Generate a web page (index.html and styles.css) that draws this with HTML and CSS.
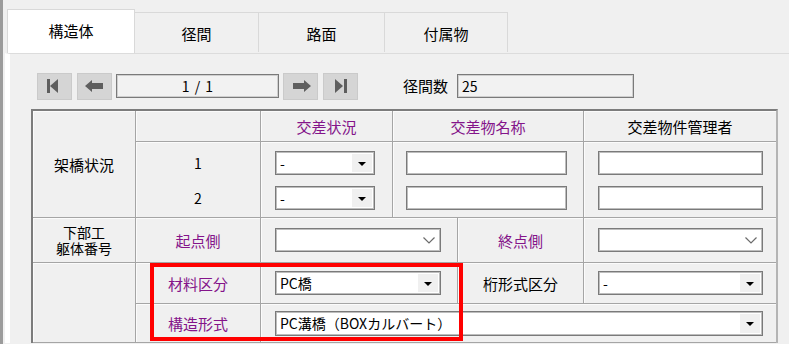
FILE: index.html
```html
<!DOCTYPE html>
<html lang="ja">
<head>
    <meta charset="UTF-8">
    <title>構造体</title>
    <link rel="stylesheet" href="styles.css">
</head>
<body>
    <div class="window">
        <div class="tabs">
            <div class="tab active">構造体</div>
            <div class="tab w124">径間</div>
            <div class="tab w126">路面</div>
            <div class="tab w123">付属物</div>
        </div>
        <div class="panel">
            <div class="panel-body">
                <div class="nav">
                    <button class="nav-btn" type="button">
                        <svg width="35" height="27" viewBox="0 0 35 27"><rect x="10" y="6" width="3" height="14" fill="#5e5e5e"/><polygon points="21,6 13,13 21,20" fill="#5e5e5e"/></svg>
                    </button>
                    <button class="nav-btn" type="button">
                        <svg width="35" height="27" viewBox="0 0 35 27"><polygon points="8,13 15,7 15,10 26,10 26,16 15,16 15,19" fill="#5e5e5e"/></svg>
                    </button>
                    <div class="page-box">1 / 1</div>
                    <button class="nav-btn" type="button">
                        <svg width="35" height="27" viewBox="0 0 35 27"><polygon points="28,13 21,7 21,10 10,10 10,16 21,16 21,19" fill="#5e5e5e"/></svg>
                    </button>
                    <button class="nav-btn" type="button">
                        <svg width="35" height="27" viewBox="0 0 35 27"><polygon points="12,6 20,13 12,20" fill="#5e5e5e"/><rect x="21" y="6" width="3" height="14" fill="#5e5e5e"/></svg>
                    </button>
                    <span class="span-label">径間数</span>
                    <div class="span-box">25</div>
                </div>

                <div class="sheet">
                    <!-- 架橋状況 -->
                    <div class="cell c1 r1-3">架橋状況</div>
                    <div class="cell c2 r1"></div>
                    <div class="cell c3 r1 purple">交差状況</div>
                    <div class="cell c4-6 r1 purple">交差物名称</div>
                    <div class="cell c6 r1 last">交差物件管理者</div>

                    <div class="cell c2 r2 stack">
                        <div class="num">1</div>
                        <div class="num">2</div>
                    </div>
                    <div class="cell c3 r2 stack pad">
                        <div class="select w100"><span>-</span><i class="arrow"></i></div>
                        <div class="select w100"><span>-</span><i class="arrow"></i></div>
                    </div>
                    <div class="cell c4-6 r2 stack pad13">
                        <div class="input w161"></div>
                        <div class="input w161"></div>
                    </div>
                    <div class="cell c6 r2 stack pad last">
                        <div class="input w165"></div>
                        <div class="input w165"></div>
                    </div>

                    <!-- 下部工 躯体番号 -->
                    <div class="cell c1 r3 tight">
                        <span>下部工</span>
                        <span>躯体番号</span>
                    </div>
                    <div class="cell c2 r3 purple">起点側</div>
                    <div class="cell c3-5 r3 pad left">
                        <div class="combo w166">
                            <svg width="12" height="7" viewBox="0 0 12 7"><polyline points="0.5,0.5 6,6 11.5,0.5" fill="none" stroke="#6b6b6b" stroke-width="1.2"/></svg>
                        </div>
                    </div>
                    <div class="cell c5 r3 purple">終点側</div>
                    <div class="cell c6 r3 pad left last">
                        <div class="combo w165">
                            <svg width="12" height="7" viewBox="0 0 12 7"><polyline points="0.5,0.5 6,6 11.5,0.5" fill="none" stroke="#6b6b6b" stroke-width="1.2"/></svg>
                        </div>
                    </div>

                    <!-- 材料区分 / 構造形式 -->
                    <div class="cell c1 r4-6"></div>
                    <div class="cell c2 r4 purple">材料区分</div>
                    <div class="cell c3-5 r4 pad left">
                        <div class="select w166"><span>PC橋</span><i class="arrow"></i></div>
                    </div>
                    <div class="cell c5 r4">桁形式区分</div>
                    <div class="cell c6 r4 pad left last">
                        <div class="select w165"><span>-</span><i class="arrow"></i></div>
                    </div>

                    <div class="cell c2 r5 purple">構造形式</div>
                    <div class="cell c3-7 r5 pad left last">
                        <div class="select w488 tall"><span>PC溝橋（BOXカルバート）</span><i class="arrow"></i></div>
                    </div>
                </div>
            </div>
        </div>
        <div class="highlight-box"></div>
    </div>
</body>
</html>
```

FILE: styles.css
```css
body {
    margin: 0;
    height: 344px;
    overflow: hidden;
    background-color: #f0f0f0;
    font-family: "Noto Sans CJK JP", "Noto Sans", sans-serif;
    font-size: 15px;
    color: #000;
}
.window {
    position: relative;
    height: 344px;
    border-left: 3px solid #9b9b9b;
}

/* タブ */
.tabs {
    display: flex;
    align-items: flex-end;
    height: 44px;
    padding: 9px 0 0 4px;
}
.tab {
    box-sizing: border-box;
    height: 40px;
    margin-bottom: 1px;
    display: flex;
    align-items: center;
    justify-content: center;
    border: 1px solid #d9d9d9;
    border-bottom: none;
    border-left: none;
    background-color: #f0f0f0;
    padding-top: 2px;
}
.tab.active {
    width: 128px;
    height: 44px;
    margin-bottom: 0;
    background-color: #fff;
    border-left: 1px solid #d9d9d9;
    padding-top: 0;
    padding-bottom: 3px;
}
.w124 { width: 124px; }
.w126 { width: 126px; }
.w123 { width: 123px; }

.panel {
    margin-left: 2px;
    border-left: 5px solid #fff;
    border-top: 1px solid #dcdcdc;
}
.panel-body {
    padding-left: 21px;
}

/* ナビゲーション */
.nav {
    display: flex;
    align-items: flex-start;
    padding-top: 19px;
    margin-left: 6px;
}
.nav-btn {
    width: 35px;
    height: 27px;
    padding: 0;
    border: 1px solid #cacaca;
    background-color: #d5d5d5;
    margin-right: 5px;
}
.nav-btn svg {
    display: block;
    margin: -1px;
}
.page-box {
    box-sizing: border-box;
    width: 163px;
    height: 24px;
    margin: 1px 4px 0 -1px;
    border: 1px solid #7a7a7a;
    box-shadow: inset 0 0 0 1px #cfcfcf;
    background-color: #f2f2f2;
    text-align: center;
    line-height: 22px;
    font-size: 14px;
    word-spacing: 2px;
}
.span-label {
    margin-left: 40px;
    line-height: 26px;
}
.span-box {
    box-sizing: border-box;
    width: 177px;
    height: 24px;
    margin: 1px 0 0 9px;
    border: 1px solid #7a7a7a;
    box-shadow: inset 0 0 0 1px #cfcfcf;
    background-color: #f2f2f2;
    padding-left: 4px;
    line-height: 22px;
    font-size: 14px;
}

/* 表 */
.sheet {
    display: grid;
    grid-template-columns: 103px 125px 132px 65px 126px 1fr;
    grid-template-rows: 31px 76px 45px 41px 39px;
    width: 747px;
    box-sizing: border-box;
    margin-top: 9px;
    border-top: 2px solid #7c7c7c;
    border-left: 2px solid #7c7c7c;
    border-right: 2px solid #b4b4b4;
}
.cell {
    box-sizing: border-box;
    border-right: 1px solid #a5a5a5;
    border-bottom: 1px solid #a5a5a5;
    box-shadow: inset 1px 1px 0 #fbfbfb;
    display: flex;
    align-items: center;
    justify-content: center;
    text-align: center;
}
.cell.last { border-right: none; }
.cell.left { justify-content: flex-start; }
.cell.tight {
    flex-direction: column;
    font-size: 14px;
    line-height: 16px;
    padding-bottom: 1px;
}
.purple { color: #84148a; }

.c1 { grid-column: 1; }
.c2 { grid-column: 2; }
.c3 { grid-column: 3; }
.c3-5 { grid-column: 3 / 5; }
.c3-7 { grid-column: 3 / 7; }
.c4-6 { grid-column: 4 / 6; }
.c5 { grid-column: 5; }
.c6 { grid-column: 6; }
.r1 { grid-row: 1; }
.r1-3 { grid-row: 1 / 3; }
.r2 { grid-row: 2; }
.r3 { grid-row: 3; }
.r4 { grid-row: 4; }
.r4-6 { grid-row: 4 / 6; }
.r5 { grid-row: 5; }

.stack {
    flex-direction: column;
    justify-content: flex-start;
    align-items: flex-start;
    gap: 11px;
    padding-top: 9px;
}
.cell.c2.stack { align-items: center; }
.pad { padding-left: 14px; }
.pad13 { padding-left: 13px; }
.num {
    height: 24px;
    line-height: 24px;
    font-size: 14px;
}

/* 入力欄 */
.input,
.select,
.combo {
    box-sizing: border-box;
    height: 24px;
    border: 1px solid #7a7a7a;
    box-shadow: inset 0 0 0 1px #bdbdbd;
    background-color: #fff;
}
.select {
    display: flex;
    align-items: center;
    padding: 2px 2px 2px 4px;
    font-size: 14px;
    text-align: left;
}
.select.tall { height: 25px; }
.select span {
    flex: 1;
    white-space: nowrap;
    overflow: hidden;
}
.select .arrow {
    align-self: stretch;
    width: 20px;
    background-color: #f0f0f0;
    position: relative;
}
.select .arrow::after {
    content: "";
    position: absolute;
    left: 6px;
    top: 8px;
    border-left: 4px solid transparent;
    border-right: 4px solid transparent;
    border-top: 4px solid #000;
}
.combo {
    display: flex;
    align-items: center;
    justify-content: flex-end;
    padding-right: 5px;
}
.w100 { width: 100px; }
.w161 { width: 161px; }
.w165 { width: 165px; }
.w166 { width: 166px; }
.w488 { width: 488px; }

/* 強調枠 */
.highlight-box {
    position: absolute;
    left: 147px;
    top: 263px;
    width: 313px;
    height: 78px;
    box-sizing: border-box;
    border: 4px solid #ff0000;
}
```
